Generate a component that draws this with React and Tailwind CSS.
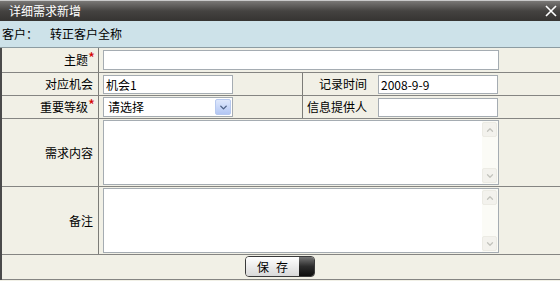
import { ChevronDown, ChevronUp } from "lucide-react";

const font = { fontFamily: '"Noto Sans CJK SC", "Liberation Sans", sans-serif' };

function Star() {
  return <span className="relative top-[-3px] text-[15px] leading-none text-[#d40000]">*</span>;
}

function Label({ children, star, className = "" }) {
  return (
    <div className={`flex items-center justify-end text-[12px] text-black ${className}`}>
      <span>{children}</span>
      {star && <Star />}
    </div>
  );
}

function Input({ value = "", className = "" }) {
  return (
    <input
      defaultValue={value}
      className={`h-[19px] border border-[#a5acb2] bg-white px-[2px] text-[12px] text-black outline-none ${className}`}
      style={font}
    />
  );
}

function Select() {
  return (
    <div className="flex h-[20px] w-[130px] items-stretch border border-[#a5acb2] bg-white">
      <span className="flex-1 pl-[4px] text-[12px] leading-[18px]">请选择</span>
      <span className="m-[1px] flex w-[16px] items-center justify-center rounded-[2px] border border-[#b7c9ef] bg-gradient-to-b from-[#dfe8fc] to-[#b3c7f4]">
        <ChevronDown className="h-[11px] w-[11px] text-[#4d6185]" strokeWidth={3} />
      </span>
    </div>
  );
}

function TextBox() {
  return (
    <div className="flex h-[65px] w-[396px] border border-[#a5acb2] bg-white">
      <textarea className="flex-1 resize-none p-[2px] text-[12px] outline-none" style={font} />
      <div className="flex w-[16px] flex-col justify-between bg-[#fbfbf6] py-[1px]">
        <span className="flex h-[15px] w-[15px] items-center justify-center rounded-[2px] border border-[#ecebe4] bg-[#f3f2ed]">
          <ChevronUp className="h-[10px] w-[10px] text-[#c3c3bd]" strokeWidth={3} />
        </span>
        <span className="flex h-[15px] w-[15px] items-center justify-center rounded-[2px] border border-[#ecebe4] bg-[#f3f2ed]">
          <ChevronDown className="h-[10px] w-[10px] text-[#c3c3bd]" strokeWidth={3} />
        </span>
      </div>
    </div>
  );
}

export default function App() {
  return (
    <div className="h-[281px] w-[560px] overflow-hidden bg-[#f1f0e6]" style={font}>
      {/* title bar */}
      <div className="relative h-[21px] border-t border-[#c9c9c9] bg-gradient-to-b from-[#7a7876] via-[#454341] to-[#363432]">
        <span className="absolute left-[9px] top-[1px] text-[12px] leading-[18px] text-white">详细需求新增</span>
        <svg className="absolute right-[3px] top-[4px]" width="12" height="12" viewBox="0 0 12 12">
          <path d="M1 1 L11 11 M11 1 L1 11" stroke="#ffffff" strokeWidth="1.6" />
        </svg>
      </div>

      {/* customer bar */}
      <div className="flex h-[27px] items-center border-b border-[#8c9ca2] bg-[#cde2e9] text-[12px] text-black">
        <span className="pl-[2px]">客户：</span>
        <span className="pl-[12px]">转正客户全称</span>
      </div>

      <div className="border-l-2 border-[#4a4a4a]">
        <div className="flex h-[25px] border-b border-[#858582]">
          <Label star className="w-[97px] border-r border-[#7c7c78] pr-[3px]">主题</Label>
          <div className="flex items-center pl-[4px]">
            <Input className="h-[20px] w-[396px]" />
          </div>
        </div>

        <div className="flex h-[23px] border-b border-[#858582]">
          <Label className="w-[97px] border-r border-[#7c7c78] pr-[5px]">对应机会</Label>
          <div className="flex w-[204px] items-center border-r border-[#7c7c78] pl-[4px]">
            <Input value="机会1" className="w-[130px]" />
          </div>
          <Label className="w-[75px] pr-[11px]">记录时间</Label>
          <div className="flex items-center">
            <Input value="2008-9-9" className="w-[120px]" />
          </div>
        </div>

        <div className="flex h-[23px] border-b border-[#858582]">
          <Label star className="w-[97px] border-r border-[#7c7c78] pr-[3px]">重要等级</Label>
          <div className="flex w-[204px] items-center border-r border-[#7c7c78] pl-[4px]">
            <Select />
          </div>
          <Label className="w-[75px] pr-[11px]">信息提供人</Label>
          <div className="flex items-center">
            <Input className="w-[120px]" />
          </div>
        </div>

        <div className="flex h-[68px] border-b border-[#858582]">
          <Label className="w-[97px] border-r border-[#7c7c78] pr-[5px]">需求内容</Label>
          <div className="flex items-center pl-[4px]">
            <TextBox />
          </div>
        </div>

        <div className="flex h-[68px] border-b border-[#858582]">
          <Label className="w-[97px] border-r border-[#7c7c78] pr-[5px]">备注</Label>
          <div className="flex items-center pl-[4px]">
            <TextBox />
          </div>
        </div>

        <div className="flex h-[25px] items-start justify-center border-b border-[#858582] pt-[1px] pr-[2px]">
          <button className="flex h-[21px] w-[70px] overflow-hidden rounded-[4px] border border-[#3a3a3a]">
            <span className="flex h-full w-[53px] items-center justify-center gap-[7px] bg-gradient-to-b from-[#ffffff] to-[#d9d9d9] text-[12px] text-black">
              <span>保</span>
              <span>存</span>
            </span>
            <span className="h-full flex-1 bg-gradient-to-b from-[#777777] via-[#2c2c2c] to-[#0e0e0e]" />
          </button>
        </div>
      </div>
    </div>
  );
}
